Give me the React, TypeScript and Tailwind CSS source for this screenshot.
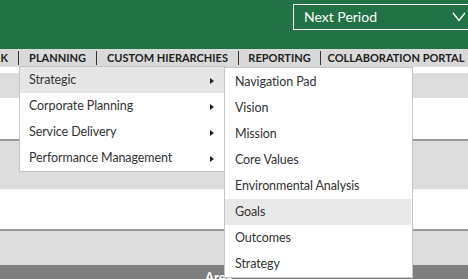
import React from "react";

const font = { fontFamily: 'Lato, "Open Sans", sans-serif' };

const navItems = [
  { label: "PLANNING", w: "w-[77px]" },
  { label: "CUSTOM HIERARCHIES", w: "w-[141px]" },
  { label: "REPORTING", w: "w-[81px]" },
  { label: "COLLABORATION PORTAL", w: "w-[150px]" },
];

const mainMenu = ["Strategic", "Corporate Planning", "Service Delivery", "Performance Management"];

const subMenu = [
  "Navigation Pad",
  "Vision",
  "Mission",
  "Core Values",
  "Environmental Analysis",
  "Goals",
  "Outcomes",
  "Strategy",
];

const Arrow = () => (
  <span className="border-y-[3px] border-l-[4px] border-y-transparent border-l-[#222] w-0 h-0 mt-[2px]" />
);

const App = () => {
  return (
    <div className="relative w-[468px] h-[279px] overflow-hidden bg-white" style={font}>
      {/* header */}
      <header className="h-[49px] bg-[#217346] flex items-start justify-end">
        <div className="mt-[4px] ml-auto w-[180px] h-[26px] border border-white flex items-center justify-between pl-[10px] pr-[4px] mr-[-5px]">
          <span className="text-white text-[14px] leading-none">Next Period</span>
          <svg width="14" height="10" viewBox="0 0 14 10" className="mr-[2px]">
            <path d="M1 1 L7 8.5 L13 1" fill="none" stroke="white" strokeWidth="1.3" />
          </svg>
        </div>
      </header>

      {/* nav */}
      <nav className="h-[18px] bg-[#d9d9d9] flex items-center text-[11px] font-bold text-[#222] whitespace-nowrap">
        <div className="w-[18px] shrink-0 flex justify-end overflow-hidden pr-[10px]">
          <span className="shrink-0">FRAMEWORK</span>
        </div>
        {navItems.map((item) => (
          <div key={item.label} className="flex items-center shrink-0">
            <span className="w-px h-[14px] bg-[#333]" />
            <span className={`${item.w} text-center`}>{item.label}</span>
          </div>
        ))}
      </nav>

      {/* page body */}
      <div className="h-[6px]" />
      <div className="h-[25px] bg-[#dcdcdc]" />
      <div className="h-[41px] bg-white" />
      <div className="h-[2px] bg-[#999]" />
      <div className="h-[48px] bg-[#dcdcdc]" />
      <div className="h-[40px] bg-white" />
      <div className="h-[2px] bg-[#999]" />
      <div className="h-[34px] bg-[#dcdcdc]" />
      <div className="h-[14px] bg-[#7f7f7f] pl-[205px] pt-[6px] overflow-hidden">
        <span className="block text-white text-[13px] font-bold leading-none">Area</span>
      </div>

      {/* dropdown menu */}
      <div className="absolute left-[19px] top-[66px] w-[207px] bg-white border border-[#c6c6c6] text-[12.5px] tracking-[-0.1px] text-[#333]">
        {mainMenu.map((m, i) => (
          <div
            key={m}
            className={`h-[26px] flex items-center justify-between pl-[9px] pr-[11px] ${i === 0 ? "bg-[#e6e6e6]" : ""}`}
          >
            <span>{m}</span>
            <Arrow />
          </div>
        ))}
      </div>

      {/* submenu */}
      <div className="absolute left-[224px] top-[67px] w-[189px] bg-white border border-[#c6c6c6] pt-px text-[12.5px] tracking-[-0.1px] text-[#333]">
        {subMenu.map((s) => (
          <div
            key={s}
            className={`h-[26px] flex items-center pl-[10px] ${s === "Goals" ? "bg-[#e8e8e8] mr-px" : ""}`}
          >
            {s}
          </div>
        ))}
      </div>
    </div>
  );
};

export default App;
